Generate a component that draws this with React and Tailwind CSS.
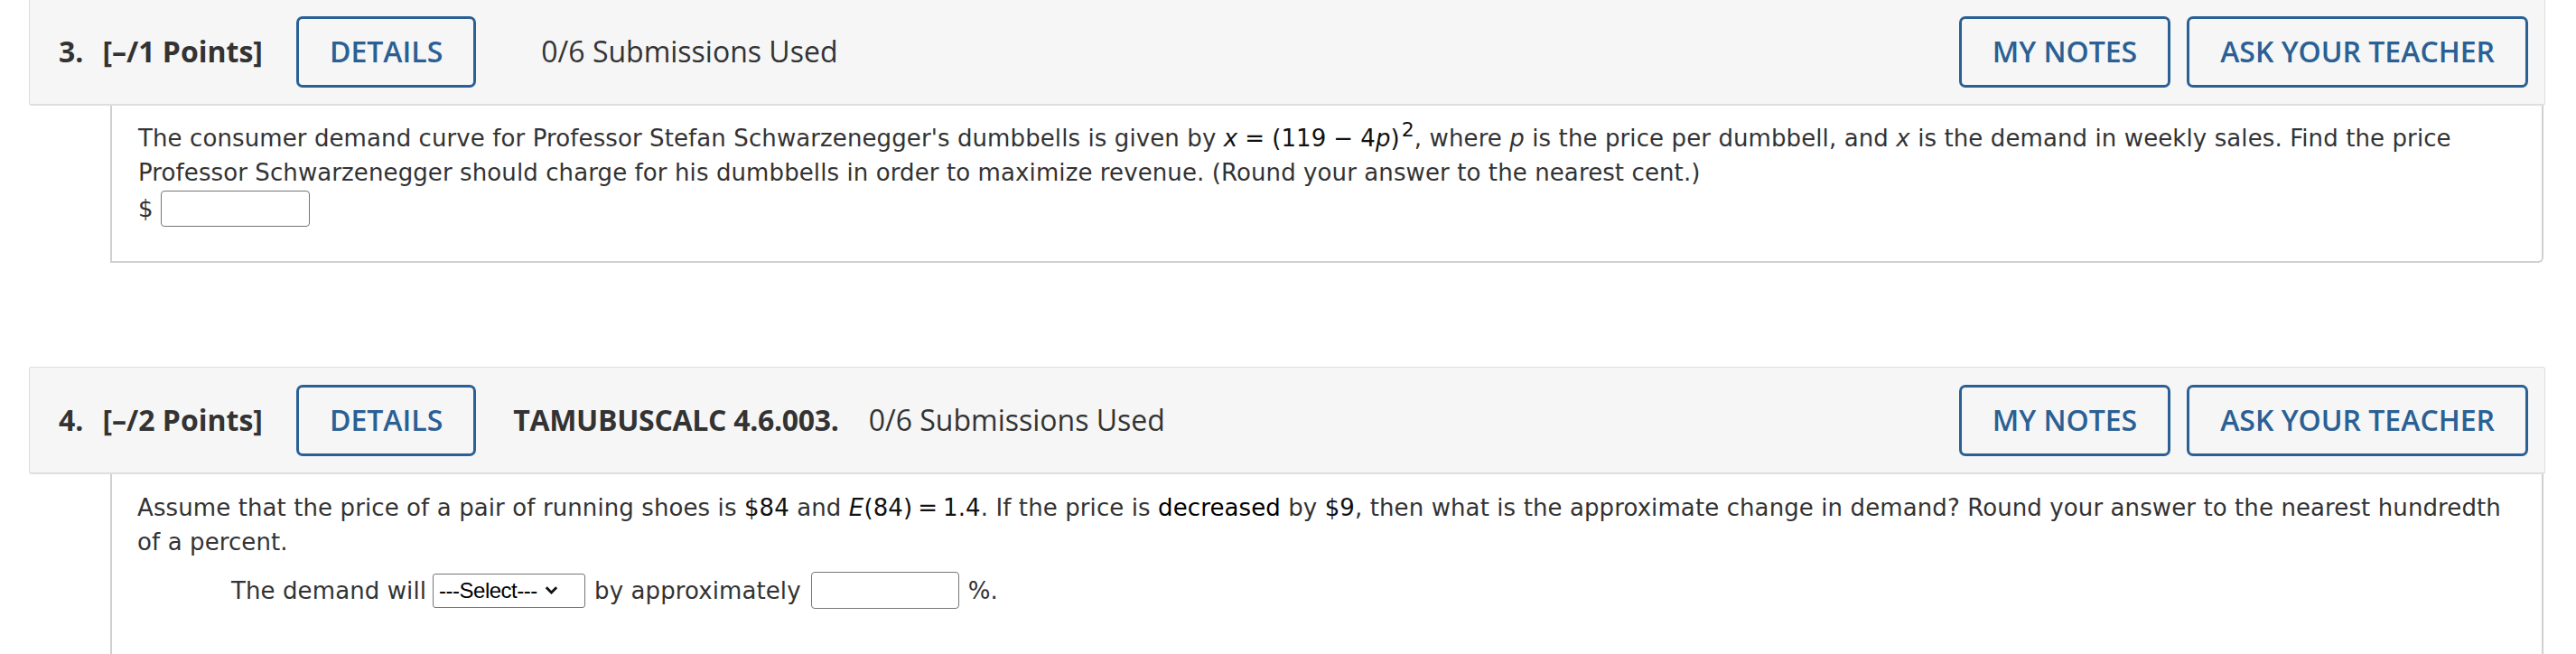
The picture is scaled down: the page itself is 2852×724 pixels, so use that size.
import React from 'react'

const Btn = ({ children }) => (
  <div className="h-[79px] px-[34px] flex items-center border-[3px] border-[#2a6094] rounded-[7px] text-[#2a6094] font-semibold text-[32px] bg-[#f6f6f6] whitespace-nowrap">
    {children}
  </div>
)

const Header = ({ num, points, code, extraClass }) => (
  <div className={"h-[119px] box-border flex items-center pl-[32px] pr-[18px] bg-[#f6f6f6] border border-[#dedede] border-b-2 rounded-[3px] font-['Open_Sans'] text-[#333] text-[32px] " + extraClass}>
    <span className="font-bold">{num}</span>
    <span className="font-bold ml-[21px]">{points}</span>
    <div className="ml-[37px]">
      <Btn>DETAILS</Btn>
    </div>
    {code ? (
      <>
        <span className="font-bold ml-[41px] tracking-[-0.3px]">{code}</span>
        <span className="ml-[33px]">0/6 Submissions Used</span>
      </>
    ) : (
      <span className="ml-[72px]">0/6 Submissions Used</span>
    )}
    <div className="ml-auto flex gap-[18px]">
      <Btn>MY NOTES</Btn>
      <Btn>ASK YOUR TEACHER</Btn>
    </div>
  </div>
)

const TextBox = ({ w, h }) => (
  <div className={"border-[1.5px] border-[#767676] rounded-[4px] bg-white " + w + " " + h} />
)

export default function App() {
  return (
    <div className="w-[2852px] h-[724px] overflow-hidden bg-white">
      <div className="pl-[32px] pr-[34px]">
        {/* question 3 */}
        <Header num="3." points="[–/1 Points]" extraClass="-mt-[2px]" />
        <div className="ml-[90px] mr-[2px] border-x-2 border-b-2 border-[#d0d0d0] rounded-br-[6px] pl-[29px] pr-[22px] pt-[17px] pb-[37px] font-['DejaVu_Sans'] text-[26px] leading-[38px] tracking-[0.1px] text-[#333]">
          <p>
            The consumer demand curve for Professor Stefan Schwarzenegger's dumbbells is given by{' '}
            <span className="text-[#111]">
              <i>x</i><span className="mx-[8px]">=</span>(119<span className="mx-[8px]">−</span>4<i>p</i>)<sup className="text-[22px] ml-[2px]">2</sup>
            </span>
            , where <i>p</i> is the price per dumbbell, and <i>x</i> is the demand in weekly sales. Find the price Professor Schwarzenegger should charge for his dumbbells in order to maximize revenue. (Round your answer to the nearest cent.)
          </p>
          <div className="flex items-center gap-[8px] h-[42px]">
            <span>$</span>
            <TextBox w="w-[165px]" h="h-[40px]" />
          </div>
        </div>

        {/* question 4 */}
        <div className="mt-[115px]">
          <Header num="4." points="[–/2 Points]" code="TAMUBUSCALC 4.6.003." extraClass="" />
        </div>
        <div className="ml-[90px] mr-[2px] h-[300px] border-x-2 border-[#d0d0d0] pl-[28px] pr-[20px] pt-[18px] font-['DejaVu_Sans'] text-[26px] leading-[38px] tracking-[0.1px] text-[#333]">
          <p>
            Assume that the price of a pair of running shoes is <span className="text-[#111]">$84</span> and{' '}
            <span className="text-[#111]"><i>E</i>(84)<span className="mx-[6px]">=</span>1.4</span>. If the price is{' '}
            <span className="text-black">decreased</span> by <span className="text-[#111]">$9</span>, then what is the approximate change in demand? Round your answer to the nearest hundredth of a percent.
          </p>
          <div className="mt-[14px] pl-[104px] flex items-center h-[41px]">
            <span>The demand will</span>
            <div className="ml-[7px] w-[169px] h-[38px] border-[1.5px] border-[#767676] rounded-[3px] flex items-center pl-[6px] font-['Liberation_Sans'] text-[24px] tracking-normal text-black bg-white">
              <span className="tracking-[-0.5px]">---Select---</span>
              <svg className="ml-[8px]" width="15" height="11" viewBox="0 0 15 11">
                <path d="M1.8 2.2 L7.5 8 L13.2 2.2" fill="none" stroke="#111" strokeWidth="2.8" />
              </svg>
            </div>
            <span className="ml-[10px]">by approximately</span>
            <div className="ml-[11px]">
              <TextBox w="w-[164px]" h="h-[41px]" />
            </div>
            <span className="ml-[10px]">%.</span>
          </div>
        </div>
      </div>
    </div>
  )
}
